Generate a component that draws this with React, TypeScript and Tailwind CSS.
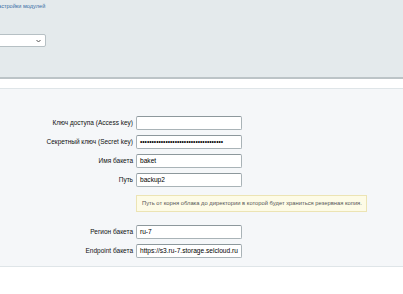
import React from "react";

function Row({ label, children }: { label: string; children: React.ReactNode }) {
  return (
    <div className="flex items-center">
      <div className="w-[136px] text-right pr-[3px] text-[6.5px] text-[#111] whitespace-nowrap">{label}</div>
      <div className="w-[106px]">{children}</div>
    </div>
  );
}

function Field({ value = "" }: { value?: string }) {
  return (
    <div className="h-[14px] w-[106px] rounded-[2px] border border-[#a9b3b7] border-t-[#8d989c] bg-white px-[3px] flex items-center text-[6.6px] text-black overflow-hidden whitespace-nowrap">
      {value}
    </div>
  );
}

export default function App() {
  return (
    <div className="w-[403px] h-[294px] bg-white font-['Liberation_Sans',Arial,sans-serif] overflow-hidden">
      <div className="h-[79px] bg-[#e4eaec] border-b-2 border-[#bcc4c7] pt-[2px]">
        <div className="-ml-[6px] text-[5.6px] text-[#3a6ea5] leading-[8px]">Настройки модулей</div>
        <div className="mt-[24px] -ml-[10px] w-[56px] h-[13px] bg-white border border-[#b6c0c4] rounded-[2px] flex items-center justify-end pr-[4px]">
          <svg width="5" height="4" viewBox="0 0 5 4"><path d="M0.5 1l2 2 2-2" stroke="#555" strokeWidth="1" fill="none" /></svg>
        </div>
      </div>
      <div className="mt-[9px] h-[179px] bg-[#f5f7f9] border-t border-b border-[#dfe5e8] pt-[27px] flex flex-col gap-[5px]">
        <Row label="Ключ доступа (Access key)"><Field /></Row>
        <Row label="Секретный ключ (Secret key)"><Field value="••••••••••••••••••••••••••••••••••••" /></Row>
        <Row label="Имя бакета"><Field value="baket" /></Row>
        <Row label="Путь"><Field value="backup2" /></Row>
        <div className="ml-[136px] mt-[3px] w-[231px] h-[17px] bg-[#fdfbe6] border border-[#ece4b4] flex items-center px-[5px] text-[5.8px] text-[#555] whitespace-nowrap overflow-hidden">
          Путь от корня облака до директории в которой будет храниться резервная копия.
        </div>
        <div className="h-[3px]" />
        <Row label="Регион бакета"><Field value="ru-7" /></Row>
        <Row label="Endpoint бакета"><Field value="https://s3.ru-7.storage.selcloud.ru" /></Row>
      </div>
    </div>
  );
}
